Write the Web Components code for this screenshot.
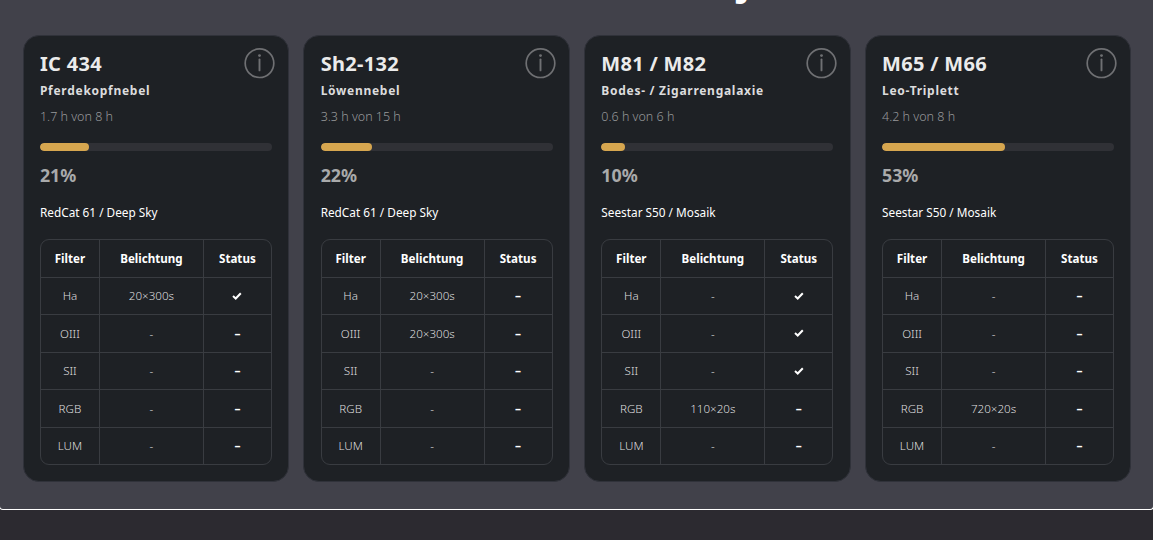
<!DOCTYPE html>
<html lang="de">
<head>
<meta charset="UTF-8">
<title>Projekte</title>
<style>
  html, body {
    margin: 0;
    height: 100%;
    overflow: hidden;
    background: #2c2a30;
    font-family: "Noto Sans", sans-serif;
    color: #fff;
  }
</style>
</head>
<body>
<project-section></project-section>

<script>
const projects = [
  { name: 'IC 434', alias: 'Pferdekopfnebel', time: '1.7 h von 8 h', percent: 21, setup: 'RedCat 61 / Deep Sky',
    filters: [['Ha', '20×300s', true], ['OIII', '-', false], ['SII', '-', false], ['RGB', '-', false], ['LUM', '-', false]] },
  { name: 'Sh2-132', alias: 'Löwennebel', time: '3.3 h von 15 h', percent: 22, setup: 'RedCat 61 / Deep Sky',
    filters: [['Ha', '20×300s', false], ['OIII', '20×300s', false], ['SII', '-', false], ['RGB', '-', false], ['LUM', '-', false]] },
  { name: 'M81 / M82', alias: 'Bodes- / Zigarrengalaxie', time: '0.6 h von 6 h', percent: 10, setup: 'Seestar S50 / Mosaik',
    filters: [['Ha', '-', true], ['OIII', '-', true], ['SII', '-', true], ['RGB', '110×20s', false], ['LUM', '-', false]] },
  { name: 'M65 / M66', alias: 'Leo-Triplett', time: '4.2 h von 8 h', percent: 53, setup: 'Seestar S50 / Mosaik',
    filters: [['Ha', '-', false], ['OIII', '-', false], ['SII', '-', false], ['RGB', '720×20s', false], ['LUM', '-', false]] }
];

class InfoIcon extends HTMLElement {
  connectedCallback() {
    this.attachShadow({ mode: 'open' });
    this.shadowRoot.innerHTML = `
      <style>
        :host { display: block; width: 31px; height: 31px; }
        svg { display: block; }
      </style>
      <svg width="31" height="31" viewBox="0 0 31 31" fill="none" stroke="#6f7073">
        <circle cx="15.5" cy="15.2" r="14.3" stroke-width="1.7"/>
        <path d="M15.5 11.4V22.4" stroke-width="1.9" stroke-linecap="round"/>
        <circle cx="15.5" cy="7.6" r="1.4" fill="#6f7073" stroke="none"/>
      </svg>
    `;
  }
}

class StatusMark extends HTMLElement {
  connectedCallback() {
    this.attachShadow({ mode: 'open' });
    this.shadowRoot.innerHTML = `
      <style>
        :host { display: block; font-size: 12px; font-weight: 700; color: #fff; }
        svg { display: block; }
      </style>
      ${this.hasAttribute('done')
        ? '<svg width="10" height="8" viewBox="0 0 10 8" fill="none" stroke="#fff" stroke-width="2"><path d="M1 4.1L3.7 6.5L8.8 1.2"/></svg>'
        : '<span>–</span>'}
    `;
  }
}

class ProgressBar extends HTMLElement {
  connectedCallback() {
    this.attachShadow({ mode: 'open' });
    this.shadowRoot.innerHTML = `
      <style>
        :host {
          display: block;
          height: 8px;
          border-radius: 4px;
          background: #303136;
          overflow: hidden;
        }
        .fill {
          height: 100%;
          border-radius: 4px;
          background: #d6a64f;
        }
      </style>
      <div class="fill" style="width: ${this.getAttribute('value')}%"></div>
    `;
  }
}

class FilterTable extends HTMLElement {
  connectedCallback() {
    const rows = JSON.parse(this.getAttribute('rows') || '[]');
    this.attachShadow({ mode: 'open' });
    this.shadowRoot.innerHTML = `
      <style>
        :host {
          display: block;
          box-sizing: border-box;
          height: 226px;
          border: 1px solid #393c41;
          border-radius: 9px;
          overflow: hidden;
          font-size: 11.6px;
        }
        .row {
          display: grid;
          grid-template-columns: 59px 104px 1fr;
          box-sizing: border-box;
          height: 37.5px;
          border-bottom: 1px solid #393c41;
        }
        .row:last-child {
          height: 36.5px;
          border-bottom: 0;
        }
        .row > div {
          display: flex;
          align-items: center;
          justify-content: center;
          border-right: 1px solid #393c41;
          font-weight: 300;
          color: #dededf;
        }
        .row > div:last-child {
          border-right: 0;
        }
        .row.head > div {
          font-weight: 700;
          color: #fff;
        }
      </style>
      <div class="row head"><div>Filter</div><div>Belichtung</div><div>Status</div></div>
      ${rows.map(([filter, exposure, done]) => `
        <div class="row">
          <div>${filter}</div>
          <div>${exposure}</div>
          <div><status-mark ${done ? 'done' : ''}></status-mark></div>
        </div>
      `).join('')}
    `;
  }
}

class ProjectCard extends HTMLElement {
  connectedCallback() {
    this.attachShadow({ mode: 'open' });
    this.shadowRoot.innerHTML = `
      <style>
        :host {
          display: block;
          box-sizing: border-box;
          height: 447px;
          padding: 12px 16.3px 0;
          background: #1e2125;
          border: 1px solid #30323a;
          border-radius: 16px;
        }
        .top {
          display: flex;
          justify-content: space-between;
          height: 35px;
          margin-right: -3.3px;
        }
        h3 {
          margin: 0;
          font-size: 20px;
          line-height: 32px;
          font-weight: 700;
          letter-spacing: 0.3px;
          color: #ebebeb;
        }
        .alias {
          font-size: 12px;
          line-height: 16px;
          font-weight: 700;
          letter-spacing: 0.72px;
          color: #dcdcdd;
        }
        .time {
          margin: 10px 0 18px;
          font-size: 12.5px;
          line-height: 16px;
          font-weight: 300;
          color: #98999b;
        }
        .percent {
          margin-top: 12px;
          font-size: 17.8px;
          line-height: 24px;
          font-weight: 700;
          color: #a9aaab;
        }
        .setup {
          margin: 17px 0 19px;
          font-size: 11.8px;
          line-height: 16px;
          color: #fff;
        }
      </style>
      <div class="top">
        <h3><slot name="name"></slot></h3>
        <info-icon></info-icon>
      </div>
      <div class="alias"><slot name="alias"></slot></div>
      <div class="time"><slot name="time"></slot></div>
      <progress-bar value="${this.getAttribute('percent')}"></progress-bar>
      <div class="percent">${this.getAttribute('percent')}%</div>
      <div class="setup"><slot name="setup"></slot></div>
      <slot name="table"></slot>
    `;
  }
}

class ProjectSection extends HTMLElement {
  connectedCallback() {
    this.attachShadow({ mode: 'open' });
    this.shadowRoot.innerHTML = `
      <style>
        :host {
          display: block;
          box-sizing: border-box;
          height: 510px;
          margin: 0 -1px;
          border: 1px solid #fff;
          border-top: 0;
          border-radius: 0 0 4px 4px;
          background: #41414a;
          overflow: hidden;
        }
        h2 {
          margin: 0;
          height: 35px;
          padding-left: 738px;
          font-size: 40px;
          line-height: 0;
          font-weight: 700;
          color: #fff;
        }
        h2 span {
          display: block;
          transform: translateY(-20px);
        }
        .grid {
          display: grid;
          grid-template-columns: repeat(4, 1fr);
          gap: 14.2px;
          padding: 0 21.75px 0 22.65px;
        }
      </style>
      <h2><span>j</span></h2>
      <div class="grid">
        ${projects.map(p => `
          <project-card percent="${p.percent}">
            <span slot="name">${p.name}</span>
            <span slot="alias">${p.alias}</span>
            <span slot="time">${p.time}</span>
            <span slot="setup">${p.setup}</span>
            <filter-table slot="table" rows='${JSON.stringify(p.filters)}'></filter-table>
          </project-card>
        `).join('')}
      </div>
    `;
  }
}

customElements.define('info-icon', InfoIcon);
customElements.define('status-mark', StatusMark);
customElements.define('progress-bar', ProgressBar);
customElements.define('filter-table', FilterTable);
customElements.define('project-card', ProjectCard);
customElements.define('project-section', ProjectSection);
</script>
</body>
</html>
